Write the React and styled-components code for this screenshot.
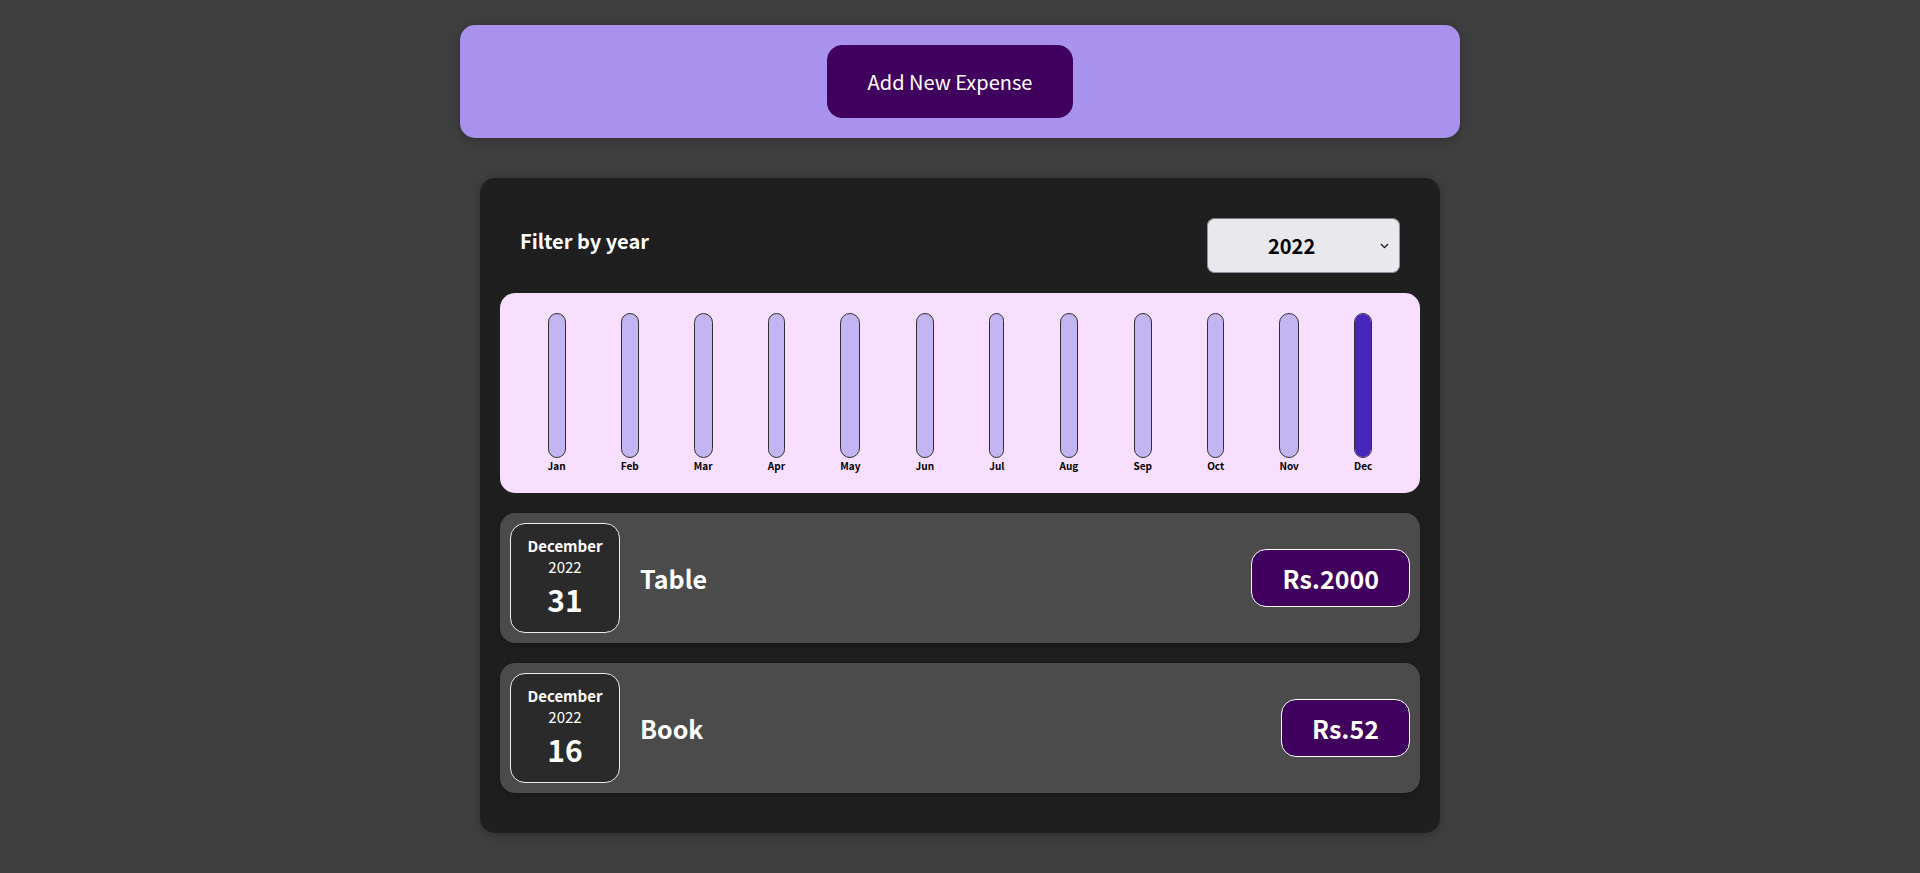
import React, { useState } from 'react';
import styled, { createGlobalStyle } from 'styled-components';
import { ChevronDown } from 'lucide-react';

const GlobalStyle = createGlobalStyle`
  html {
    font-family: "Noto Sans CJK JP", "Noto Sans", sans-serif;
  }
  body {
    margin: 0;
    background-color: #3f3f3f;
  }
  * {
    box-sizing: border-box;
  }
`;

const EXPENSES = [
  { id: 'e1', title: 'Table', amount: 2000, date: new Date(2022, 11, 31) },
  { id: 'e2', title: 'Book', amount: 52, date: new Date(2022, 11, 16) },
];

const MONTHS = ['Jan', 'Feb', 'Mar', 'Apr', 'May', 'Jun', 'Jul', 'Aug', 'Sep', 'Oct', 'Nov', 'Dec'];

const Card = styled.div`
  border-radius: 15px;
  box-shadow: 0 1.25px 10px rgba(0, 0, 0, 0.25);
`;

const NewExpense = styled(Card)`
  background-color: #a892ee;
  padding: 20px;
  margin: 25px auto 40px;
  width: 1000px;
  text-align: center;
`;

const AddButton = styled.button`
  font: inherit;
  font-size: 20px;
  line-height: 31px;
  cursor: pointer;
  padding: 20px 40px;
  border: 1px solid #40005d;
  background-color: #40005d;
  color: white;
  border-radius: 15px;
  margin-right: 20px;
`;

const Expenses = styled(Card)`
  padding: 20px;
  background-color: rgb(31, 31, 31);
  margin: 40px auto;
  width: 960px;
`;

const Filter = styled.div`
  color: white;
  padding: 0 20px;
`;

const FilterControl = styled.div`
  display: flex;
  width: 100%;
  align-items: center;
  justify-content: space-between;
  margin: 20px 0;
`;

const FilterLabel = styled.label`
  font-weight: bold;
  font-size: 20px;
  margin-bottom: 10px;
`;

const SelectWrap = styled.div`
  position: relative;
  width: 193px;
  height: 55px;
`;

const YearSelect = styled.select`
  appearance: none;
  font: inherit;
  font-size: 20px;
  font-weight: bold;
  color: #000;
  padding: 10px 60px;
  border-radius: 7.5px;
  border: 1px solid #8f8f9d;
  border-top-color: #7c7c86;
  background-color: #e9e9ed;
  width: 100%;
  height: 100%;
`;

const SelectArrow = styled.span`
  position: absolute;
  right: 9px;
  top: 50%;
  transform: translateY(-50%);
  display: flex;
  color: #111;
  pointer-events: none;
`;

const Chart = styled.div`
  padding: 20px;
  border-radius: 15px;
  background-color: #f8dfff;
  text-align: center;
  display: flex;
  justify-content: space-around;
  height: 200px;
`;

const BarColumn = styled.div`
  height: 100%;
  display: flex;
  flex-direction: column;
  align-items: center;
`;

const BarInner = styled.div`
  height: 100%;
  width: 100%;
  border: 1px solid #313131;
  border-radius: 15px;
  background-color: #c3b4f3;
  overflow: hidden;
  display: flex;
  flex-direction: column;
  justify-content: flex-end;
`;

const BarFill = styled.div`
  background-color: #4826b9;
  width: 100%;
`;

const BarLabel = styled.div`
  font-weight: bold;
  font-size: 10px;
  line-height: 15px;
  text-align: center;
`;

const List = styled.ul`
  list-style: none;
  padding: 0;
  margin: 0;
`;

const Item = styled.li`
  display: flex;
  justify-content: space-between;
  align-items: center;
  box-shadow: 0 2.5px 10px rgba(0, 0, 0, 0.25);
  padding: 10px;
  margin: 20px 0;
  border-radius: 15px;
  background-color: #4b4b4b;
`;

const DateBox = styled.div`
  display: flex;
  flex-direction: column;
  flex-shrink: 0;
  width: 110px;
  height: 110px;
  border: 1px solid #ececec;
  background-color: #2a2a2a;
  color: white;
  border-radius: 15px;
  align-items: center;
  justify-content: center;
`;

const DatePart = styled.div`
  font-size: ${(p) => (p.$day ? '30px' : '15px')};
  font-weight: ${(p) => (p.$bold ? 'bold' : 'normal')};
  line-height: 1.448;
`;

const Description = styled.div`
  display: flex;
  flex-direction: row;
  align-items: center;
  justify-content: flex-start;
  flex: 1;
  gap: 20px;
`;

const Title = styled.h2`
  font-size: 25px;
  flex: 1;
  margin: 0 20px;
  color: white;
`;

const Price = styled.div`
  font-size: 25px;
  font-weight: bold;
  color: white;
  background-color: #40005d;
  border: 1px solid white;
  padding: 10px 30px;
  border-radius: 15px;
`;

function ExpenseDate({ date }) {
  return (
    <DateBox>
      <DatePart $bold>{date.toLocaleString('en-US', { month: 'long' })}</DatePart>
      <DatePart>{date.getFullYear()}</DatePart>
      <DatePart $bold $day>{date.toLocaleString('en-US', { day: '2-digit' })}</DatePart>
    </DateBox>
  );
}

function ExpensesChart({ expenses }) {
  const values = MONTHS.map(() => 0);
  expenses.forEach((e) => {
    values[e.date.getMonth()] += e.amount;
  });
  const max = Math.max(...values);

  return (
    <Chart>
      {MONTHS.map((m, i) => {
        const fill = max > 0 ? Math.round((values[i] / max) * 100) + '%' : '0%';
        return (
          <BarColumn key={m}>
            <BarInner>
              <BarFill style={{ height: fill }} />
            </BarInner>
            <BarLabel>{m}</BarLabel>
          </BarColumn>
        );
      })}
    </Chart>
  );
}

export default function App() {
  const [year, setYear] = useState('2022');
  const filtered = EXPENSES.filter((e) => e.date.getFullYear().toString() === year);

  return (
    <div>
      <GlobalStyle />
      <NewExpense>
        <AddButton>Add New Expense</AddButton>
      </NewExpense>
      <Expenses>
        <Filter>
          <FilterControl>
            <FilterLabel>Filter by year</FilterLabel>
            <SelectWrap>
              <YearSelect value={year} onChange={(e) => setYear(e.target.value)}>
                <option value="2022">2022</option>
                <option value="2021">2021</option>
                <option value="2020">2020</option>
                <option value="2019">2019</option>
              </YearSelect>
              <SelectArrow>
                <ChevronDown size={13} strokeWidth={2.5} />
              </SelectArrow>
            </SelectWrap>
          </FilterControl>
        </Filter>
        <ExpensesChart expenses={filtered} />
        <List>
          {filtered.map((e) => (
            <Item key={e.id}>
              <ExpenseDate date={e.date} />
              <Description>
                <Title>{e.title}</Title>
                <Price>Rs.{e.amount}</Price>
              </Description>
            </Item>
          ))}
        </List>
      </Expenses>
    </div>
  );
}
